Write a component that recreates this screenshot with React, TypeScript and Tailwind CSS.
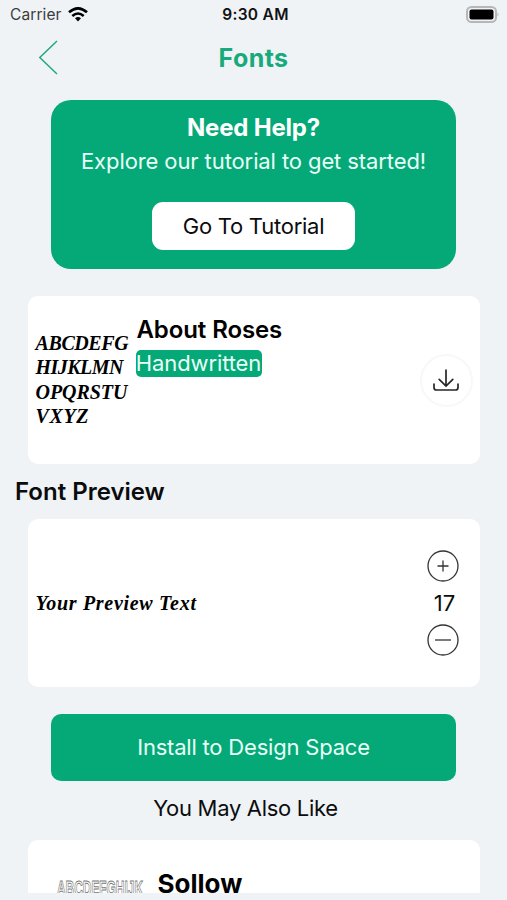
import type { ReactNode } from "react";

const glyphRows = [
  { text: "ABCDEFG", spacing: "tracking-[-0.4px]" },
  { text: "HIJKLMN", spacing: "tracking-[-0.55px]" },
  { text: "OPQRSTU", spacing: "tracking-[-0.05px]" },
  { text: "VXYZ", spacing: "tracking-[0.6px]" },
];

export default function App() {
  return (
    <div className="flex h-[900px] w-[507px] flex-col overflow-hidden bg-[#eff3f6] font-['Inter','Liberation_Sans',sans-serif] text-[#0b0c0d]">
      <StatusBar />

      {/* Nav bar */}
      <header className="grid h-[70px] shrink-0 grid-cols-[1fr_auto_1fr] items-start pt-2">
        <button aria-label="Back" className="ml-[38px] mt-px h-9 w-5">
          <svg viewBox="0 0 20 36" className="h-9 w-5" fill="none" stroke="#1fa97c" strokeWidth="1.5">
            <path d="M19 2 L1.8 18.5 L19 35" />
          </svg>
        </button>
        <h1 className="text-[25px] font-bold leading-10 text-[#17aa7b]">
          <span className="tracking-[0.4px]">Fonts</span>
        </h1>
      </header>

      <main className="flex h-[793px] shrink-0 flex-col overflow-hidden">
        {/* Tutorial banner */}
        <section className="mx-auto flex h-[169px] w-[405px] shrink-0 flex-col items-center rounded-[20px] bg-[#04a977] pt-3 text-white">
          <h2 className="text-[24px] font-bold leading-8 tracking-[-0.2px]">Need Help?</h2>
          <p className="whitespace-nowrap text-[22px] leading-[34px] tracking-[-0.1px] text-[#e9fff7]">
            Explore our tutorial to get started!
          </p>
          <button className="mt-6 h-[48px] w-[203px] rounded-[11px] bg-white text-[22px] tracking-[-0.25px] text-[#0b0c0d]">
            Go To Tutorial
          </button>
        </section>

        <Card className="mt-[27px] h-[168px]">
          <div className="w-[109px] shrink-0 pl-2 pt-[35px] font-['Liberation_Serif',serif] text-[20px] font-bold italic leading-[24.3px] text-black">
            {glyphRows.map((row) => (
              <div key={row.text} className={row.spacing}>
                {row.text}
              </div>
            ))}
          </div>
          <div className="flex-1 pt-[18px]">
            <h2 className="text-[24px] font-semibold leading-8 tracking-[-0.1px] text-black">About Roses</h2>
            <span className="-ml-px mt-1 flex h-[27px] w-[126px] items-center justify-center rounded-[5px] bg-[#04a977] text-[22px] tracking-[-0.1px] text-[#e9fff7]">
              Handwritten
            </span>
          </div>
          <button
            aria-label="Download"
            className="mr-[7px] mt-[58px] flex size-[53px] items-center justify-center rounded-full border-2 border-[#f8f8f8]"
          >
            <svg viewBox="0 0 28 24" className="h-6 w-7" fill="none" stroke="#242628" strokeWidth="1.7" strokeLinecap="round">
              <path d="M14 1v16M7.2 10.4 14 17l6.800-6.600M2 15v3.500Q2 21 4.500 21h19Q26 21 26 18.500V15" />
            </svg>
          </button>
        </Card>

        <h2 className="pl-[15px] text-[24px] font-semibold leading-[55px]">Font Preview</h2>

        <Card className="h-[168px] items-center justify-between">
          <p className="pl-2 font-['Liberation_Serif',serif] text-[20px] font-bold italic leading-7 tracking-[0.7px] text-black">
            Your Preview Text
          </p>
          <div className="mr-[21px] flex w-8 flex-col items-center">
            <RoundButton label="Increase size" path="M10.500 16h11M16 10.500v11" />
            <span className="ml-1 text-[22px] leading-[42px]">17</span>
            <RoundButton label="Decrease size" path="M8 16h16" />
          </div>
        </Card>

        <button className="mx-auto mt-[27px] h-[67px] w-[405px] shrink-0 rounded-[10px] bg-[#04a977] text-[22px] tracking-[-0.2px] text-[#e9fff7]">
          Install to Design Space
        </button>
        <p className="pr-[16px] text-center text-[22px] leading-[55px] tracking-[-0.3px]">You May Also Like</p>

        <Card className="mt-1 h-[168px]">
          <div className="w-[130px] shrink-0 pl-7 pt-[36px]">
            <svg width="88" height="22" viewBox="0 0 88 22" aria-hidden="true">
              <text
                x="1"
                y="19"
                textLength="86"
                lengthAdjust="spacingAndGlyphs"
                fill="#fff"
                stroke="#777"
                strokeWidth="0.9"
                className="font-['Liberation_Sans',sans-serif] text-[21px] font-bold"
              >
                ABCDEFGHIJK
              </text>
            </svg>
          </div>
          <h2 className="pt-[28px] text-[26px] font-bold leading-8 text-black">Sollow</h2>
        </Card>
      </main>
    </div>
  );
}

function StatusBar() {
  return (
    <div className="grid h-[30px] shrink-0 grid-cols-[1fr_auto_1fr] items-center pl-[10px] pr-[7px] text-[15.5px]">
      <div className="flex items-center gap-[6px] text-[#3a3d40]">
        <span className="tracking-[0.1px]">Carrier</span>
        <svg viewBox="0 0 20 15" className="mb-px h-[15px] w-5" fill="none" stroke="#000" strokeWidth="2.6">
          <path d="M1 5.300Q10-2.600 19 5.300M4.300 9Q10 4 15.700 9" />
          <path d="M7 11.300Q10 8.700 13 11.300L10 14.500Z" fill="#000" stroke="none" />
        </svg>
      </div>
      <span className="pl-px text-center font-semibold tracking-[0.3px] text-[#111]">9:30 AM</span>
      <svg viewBox="0 0 34 17" className="mb-[2px] h-[17px] w-[34px] justify-self-end" aria-label="Battery full">
        <rect x="1" y="1" width="29" height="15" rx="4.500" fill="#eff3f6" stroke="#b5b8ba" strokeWidth="2" />
        <rect x="3.500" y="3.500" width="24" height="10" rx="2" fill="#000" />
        <path d="M31.500 6.500q2 2 0 4z" fill="#aeb1b3" />
      </svg>
    </div>
  );
}

function Card({ children, className }: { children: ReactNode; className: string }) {
  return <section className={`mx-auto flex w-[452px] shrink-0 rounded-[10px] bg-white ${className}`}>{children}</section>;
}

function RoundButton({ label, path }: { label: string; path: string }) {
  return (
    <button aria-label={label}>
      <svg viewBox="0 0 32 32" className="block size-8" fill="none" stroke="#333" strokeWidth="1.3">
        <circle cx="16" cy="16" r="15" />
        <path d={path} />
      </svg>
    </button>
  );
}
